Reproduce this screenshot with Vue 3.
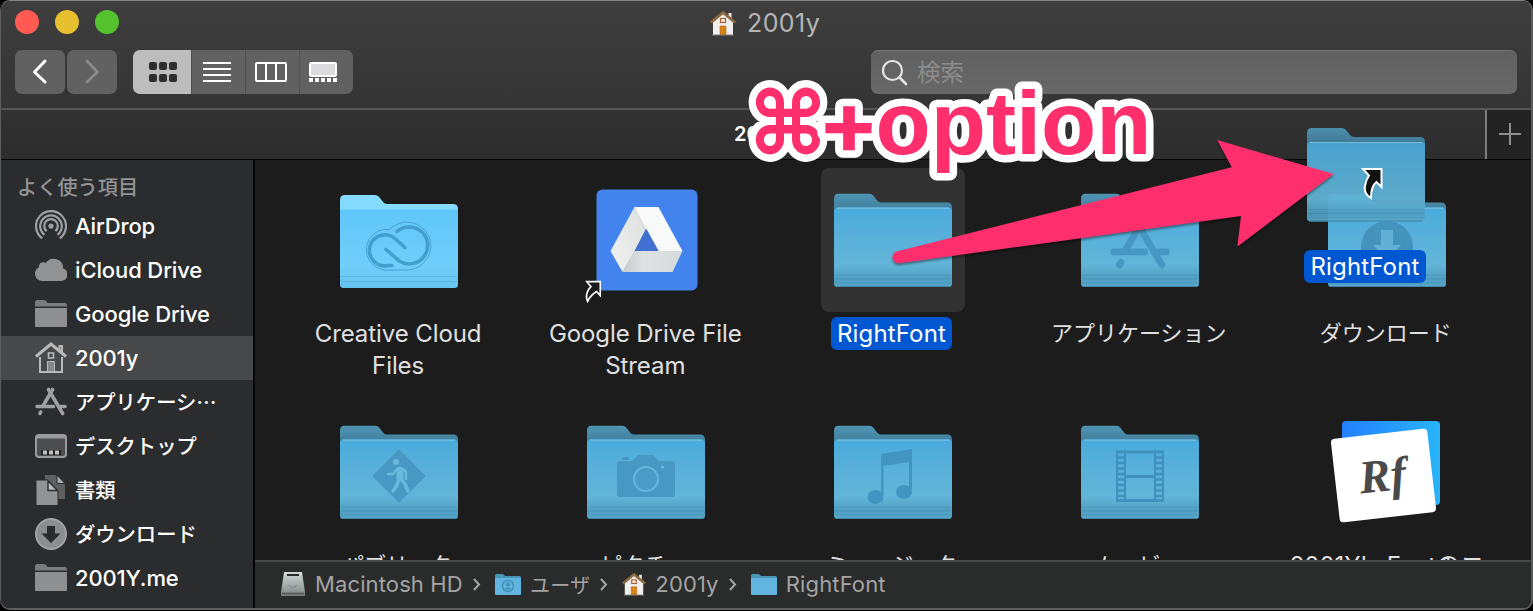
<script setup>
const sidebar = [
  { icon: 'airdrop', label: 'AirDrop' },
  { icon: 'cloud', label: 'iCloud Drive' },
  { icon: 'folder', label: 'Google Drive' },
  { icon: 'home', label: '2001y', active: true },
  { icon: 'apps', label: 'アプリケーシ…', ja: true },
  { icon: 'desktop', label: 'デスクトップ', ja: true },
  { icon: 'docs', label: '書類', ja: true },
  { icon: 'download', label: 'ダウンロード', ja: true },
  { icon: 'folder', label: '2001Y.me' },
]
const files = [
  { kind: 'light', glyph: 'cc', label: 'Creative Cloud Files' },
  { kind: 'gdrive', label: 'Google Drive File Stream' },
  { kind: 'folder', label: 'RightFont', selected: true },
  { kind: 'folder', glyph: 'apps', label: 'アプリケーション', ja: true },
  { kind: 'folder', glyph: 'download', label: 'ダウンロード', ja: true },
  { kind: 'folder', glyph: 'public', label: 'パブリック', ja: true },
  { kind: 'folder', glyph: 'camera', label: 'ピクチャ', ja: true },
  { kind: 'folder', glyph: 'music', label: 'ミュージック', ja: true },
  { kind: 'folder', glyph: 'movie', label: 'ムービー', ja: true },
  { kind: 'rightfont', label: '2001Y\'s Fontのコ' },
]
const path = [
  { icon: 'disk', label: 'Macintosh HD' },
  { icon: 'users', label: 'ユーザ', ja: true },
  { icon: 'house', label: '2001y' },
  { icon: 'folder', label: 'RightFont' },
]
const perforations = [0, 1, 2, 3, 4, 5, 6, 7]
</script>

<template>
  <div class="window">
    <svg class="defs" width="0" height="0">
      <defs>
        <linearGradient id="front" x1="0" y1="0" x2="0" y2="1">
          <stop offset="0" stop-color="#4aabdb" /><stop offset=".35" stop-color="#58b0da" />
          <stop offset=".72" stop-color="#62b5d8" /><stop offset=".9" stop-color="#519fc2" /><stop offset="1" stop-color="#57a8cb" />
        </linearGradient>
        <linearGradient id="back" x1="0" y1="0" x2="0" y2="1">
          <stop offset="0" stop-color="#4f95b4" /><stop offset=".6" stop-color="#4584a3" /><stop offset="1" stop-color="#3d7897" />
        </linearGradient>
        <linearGradient id="lightfront" x1="0" y1="0" x2="0" y2="1">
          <stop offset="0" stop-color="#5fc6f9" /><stop offset=".7" stop-color="#71cefb" /><stop offset="1" stop-color="#66c3ee" />
        </linearGradient>
        <linearGradient id="rfblue" x1="0" y1="0" x2="1" y2="0">
          <stop offset="0" stop-color="#2480ff" /><stop offset="1" stop-color="#28b4f8" />
        </linearGradient>
        <linearGradient id="gleft" x1="0" y1="1" x2="1" y2="0">
          <stop offset="0" stop-color="#f0f1f1" /><stop offset=".75" stop-color="#e2e4e4" /><stop offset="1" stop-color="#c4c8c9" />
        </linearGradient>
        <linearGradient id="gbottom" x1="0" y1="0" x2="1" y2="0">
          <stop offset="0" stop-color="#c5cacb" /><stop offset=".35" stop-color="#dfe2e3" /><stop offset="1" stop-color="#d5dadb" />
        </linearGradient>
        <linearGradient id="diskg" x1="0" y1="0" x2="0" y2="1">
          <stop offset="0" stop-color="#d4d9d8" /><stop offset=".8" stop-color="#8f9695" /><stop offset="1" stop-color="#777" />
        </linearGradient>
      </defs>
      <symbol id="s-folder" viewBox="0 0 118 94">
        <path d="M0 20V5Q0 0 5 0H35Q38 0 40 3L43 7Q44.500 9 47 9H113Q118 9 118 14V20Z" fill="url(#back)" />
        <rect y="14" width="118" height="79.500" rx="3.500" fill="url(#front)" />
        <path d="M3 14.600H115" stroke="#7cc8ea" />
        <path d="M1 81.500H117M1 85.500H117M1 89.500H117" stroke="#4691b4" stroke-width=".8" opacity=".7" />
        <path d="M2 93H116" stroke="#3f86a8" />
      </symbol>
      <symbol id="s-light" viewBox="0 0 118 94">
        <path d="M0 20V5Q0 0 5 0H35Q38 0 40 3L43 7Q44.500 9 47 9H113Q118 9 118 14V20Z" fill="#85dbfe" />
        <path d="M0 14.500H118V89.500Q118 93 114.500 93H3.500Q0 93 0 89.500Z" fill="url(#lightfront)" />
        <path d="M1 81.500H117M1 86.500H117" stroke="#55abd4" stroke-width=".8" opacity=".7" />
      </symbol>
      <symbol id="s-appstore" viewBox="0 0 32 30">
        <g fill="none" stroke="currentColor" stroke-width="3.600" stroke-linecap="round">
          <path d="M17.600 2.500L8 19" /><path d="M13.500 2.500L27.700 26.500" /><path d="M2 19.500H18.500M25.500 19.500H30M5.800 25L5 26.500" />
        </g>
      </symbol>
      <symbol id="s-house" viewBox="0 0 26 26">
        <path d="M18.500 3H21.500V9H18.500Z" fill="#e8e4e2" />
        <path d="M3 12L13 4L23 12V25H3Z" fill="#f1f0ef" />
        <path d="M1 12.500L13 2.500L25 12.500" fill="none" stroke="#8d6a3e" stroke-width="2.800" />
        <rect x="10.500" y="8.500" width="5" height="4" fill="#f6ede2" stroke="#a65c2c" stroke-width="1.200" />
        <path d="M10 16H16V25H10Z" fill="#d98411" stroke="#a8682a" stroke-width=".6" />
        <path d="M2 25H24" stroke="#817c77" />
      </symbol>
    </svg>

    <header class="toolbar">
      <div class="lights"><i class="red" /><i class="yellow" /><i class="green" /></div>
      <div class="title"><svg width="26" height="26"><use href="#s-house" /></svg><span>2001y</span></div>
      <div class="controls">
        <div class="nav">
          <button class="btn"><svg width="50" height="44"><path d="M30 11L19.500 22L30 32" fill="none" stroke="#fff" stroke-width="3" stroke-linecap="round" stroke-linejoin="round" /></svg></button>
          <button class="btn"><svg width="50" height="44"><path d="M20 11L30.500 22L20 32" fill="none" stroke="#8b8b8b" stroke-width="2.600" stroke-linecap="round" stroke-linejoin="round" /></svg></button>
        </div>
        <div class="views">
          <button class="on"><svg width="58" height="44" fill="#2e2e2e">
            <rect x="16" y="12" width="8" height="8" rx="2" /><rect x="26" y="12" width="8" height="8" rx="2" /><rect x="36" y="12" width="8" height="8" rx="2" />
            <rect x="16" y="24" width="8" height="8" rx="2" /><rect x="26" y="24" width="8" height="8" rx="2" /><rect x="36" y="24" width="8" height="8" rx="2" />
          </svg></button>
          <button><svg width="52" height="44"><path d="M11 13H39M11 19H39M11 25H39M11 31H39" stroke="#fff" stroke-width="2" /></svg></button>
          <button><svg width="52" height="44"><rect x="10" y="13" width="30" height="18" rx="1" fill="none" stroke="#fff" stroke-width="2" /><path d="M20 13V31M30 13V31" stroke="#fff" stroke-width="2" /></svg></button>
          <button><svg width="52" height="44"><rect x="10" y="13" width="26" height="13" rx="1" fill="#dcdcdf" stroke="#fff" stroke-width="2" /><path d="M9 30H37" stroke="#fff" stroke-width="4" stroke-dasharray="4 2" /></svg></button>
        </div>
        <div class="search">
          <svg width="30" height="30"><circle cx="12.500" cy="12.500" r="9.500" fill="none" stroke="#e4e4e4" stroke-width="2.200" /><path d="M19.500 19.500L26 26" stroke="#e4e4e4" stroke-width="2.600" stroke-linecap="round" /></svg>
          <span>検索</span>
        </div>
      </div>
    </header>

    <div class="tabs">
      <div class="tab">2001y</div>
      <div class="add"><svg width="24" height="24"><path d="M12 1V23M1 12H23" stroke="#8e8e8e" stroke-width="2" /></svg></div>
    </div>

    <div class="main">
      <aside class="side">
        <h2>よく使う項目</h2>
        <div v-for="item in sidebar" :key="item.label" class="row" :class="{ active: item.active, ja: item.ja }">
          <svg class="sicon" width="32" height="32" viewBox="0 0 32 32">
            <g v-if="item.icon === 'airdrop'" fill="none" stroke="#a0a1a2" stroke-width="2.200">
              <path d="M7.200 28.300A15 15 0 1 1 24.800 28.300" /><path d="M9.500 24.800A10.800 10.800 0 1 1 22.500 24.800" /><path d="M11.600 21.200A6.800 6.800 0 1 1 20.400 21.200" />
              <circle cx="16" cy="16" r="2.600" fill="#a0a1a2" stroke="none" />
            </g>
            <path v-else-if="item.icon === 'cloud'" d="M7.500 27A7.300 7.300 0 0 1 3.800 13.300Q4 8 8.500 8.200Q10 8.200 11 8.800A9.500 9.500 0 0 1 28.200 14.500A6.400 6.400 0 0 1 26 27Z" fill="#919293" />
            <g v-else-if="item.icon === 'folder'" fill="#8e8f90">
              <path d="M0 8.500V4.500Q0 2 2 2H9Q10.500 2 11.500 3.500L12.500 5H30Q32 5 32 7V8.500Z" opacity=".8" /><path d="M0 10H32V28Q32 29 31 29H1Q0 29 0 28Z" />
            </g>
            <g v-else-if="item.icon === 'home'" fill="none" stroke="#b9b9ba" stroke-width="2">
              <path d="M5 15V30H27V15M24.500 9V4H27V11" /><path d="M1 14.500L16 2L31 14.500" stroke-width="3" /><rect x="13.500" y="11" width="5" height="5" stroke-width="1.600" /><rect x="12.500" y="19.500" width="7" height="10" fill="#858687" stroke-width="1" />
            </g>
            <svg v-else-if="item.icon === 'apps'" y="1" width="32" height="30" class="gray"><use href="#s-appstore" /></svg>
            <g v-else-if="item.icon === 'desktop'">
              <rect x="1" y="5" width="30" height="22" rx="3" fill="#4d4e50" stroke="#9a9b9c" stroke-width="2" /><path d="M1 8V6H31V8Z" fill="#9a9b9c" stroke="#9a9b9c" />
              <path d="M6 20H26V25H6Z" fill="#222" /><path d="M8 22.500H24" stroke="#c0c0c0" stroke-width="4" stroke-dasharray="4 2" />
            </g>
            <g v-else-if="item.icon === 'docs'">
              <path d="M10 1H20L30 10V25H10Z" fill="#5f6061" /><path d="M22 1L30 9.500H22Z" fill="#a9aaab" stroke="#2a2c2d" />
              <path d="M1 6H12.500L23 17V31.500H1Z" fill="#929394" stroke="#2a2c2d" /><path d="M13 7L22.500 16.500H13Z" fill="#bbb" stroke="#2a2c2d" stroke-width="1.400" />
            </g>
            <g v-else>
              <circle cx="16" cy="16" r="15" fill="#8c8d8e" stroke="#a2a3a4" stroke-width="2" /><path d="M12 8H20V15.500H25.500L16 25L6.500 15.500H12Z" fill="#292b2c" />
            </g>
          </svg>
          <span>{{ item.label }}</span>
        </div>
      </aside>

      <section class="content">
        <div class="grid">
          <div v-for="f in files" :key="f.label" class="cell" :class="{ selected: f.selected, ja: f.ja }">
            <svg class="art" width="144" height="144" viewBox="0 0 144 144">
              <g v-if="f.kind === 'light'">
                <svg x="13" y="27" width="118" height="94"><use href="#s-light" /></svg>
                <g fill="none" stroke="#429fd0" stroke-linecap="round" transform="translate(1 .500)">
                  <path d="M56 101.500A19.500 19.500 0 1 1 61.500 61A24 24 0 1 1 81 101.500Z" stroke-width=".9" />
                  <path d="M64 97H60A15.500 15.500 0 1 1 67 70L77 79" stroke-width="3.600" />
                  <path d="M58 81L72 93A18.500 18.500 0 1 0 69 63" stroke-width="3.600" />
                </g>
              </g>
              <g v-else-if="f.kind === 'gdrive'" transform="translate(.500 0)">
                <rect x="22" y="21.500" width="101" height="101" rx="6" fill="#4383ee" />
                <path d="M60 39L74 60L48 104L36 83Z" fill="url(#gleft)" />
                <path d="M60 39H84L108 83H84Z" fill="#f8f9f9" />
                <path d="M60 83H108L98 104H48Z" fill="url(#gbottom)" />
                <path d="M71.500 60.500L84 83H60Z" fill="#4170d0" />
                <svg x="9" y="112" width="18" height="23" viewBox="0 0 22 28" class="alias"><path d="M4 2H20.500V19L16 14Q9 18 5 26Q1 17 9 8Z" /></svg>
              </g>
              <g v-else-if="f.kind === 'rightfont'">
                <rect x="27" y="21" width="98" height="84" rx="4" fill="url(#rfblue)" />
                <rect x="20" y="33.500" width="97" height="84" rx="4" transform="rotate(-6.500 68.500 75.500)" fill="#fff" />
                <text x="44" y="91" transform="rotate(-6 68 76)" class="rf">Rf</text>
              </g>
              <g v-else>
                <svg x="13" y="25.500" width="118" height="94"><use href="#s-folder" /></svg>
                <svg v-if="f.glyph === 'apps'" x="42" y="47" width="60" height="57" class="tint"><use href="#s-appstore" /></svg>
                <g v-else-if="f.glyph === 'download'"><circle cx="72" cy="79" r="26" fill="#4393bd" /><path d="M66 62H78V77H86L72 92L58 77H66Z" fill="#62b0d5" /></g>
                <g v-else-if="f.glyph === 'public'">
                  <rect x="53" y="57" width="38" height="38" rx="1.500" transform="rotate(45 72 76)" fill="#4898c3" />
                  <g fill="none" stroke="#69b9dc" stroke-linecap="round" stroke-linejoin="round">
                    <circle cx="69" cy="62" r="1.500" stroke-width="3" /><path d="M73 70L73 78" stroke-width="7" /><path d="M70 69L66 74H61M76 69L79 72V79" stroke-width="2.500" /><path d="M72 79L70 85L66 91M74 79L78 84L81 91" stroke-width="3.500" />
                  </g>
                </g>
                <g v-else-if="f.glyph === 'camera'">
                  <path d="M43 64Q43 61 46 61H58L63 56Q64 55 66 55H77Q79 55 80 56L85 61H98Q101 61 101 64V94Q101 97 98 97H46Q43 97 43 94Z" fill="#4798c3" /><rect x="48" y="57" width="7" height="3" rx="1.500" fill="#4798c3" />
                  <circle cx="72" cy="79" r="12" fill="#4b9cc6" stroke="#65b8dd" stroke-width="2" /><circle cx="88.500" cy="67" r="1.600" fill="#65b8dd" />
                </g>
                <g v-else-if="f.glyph === 'music'" fill="#4395c1">
                  <path d="M60 54L91 49V90H88V62L62.500 66V96H60Z" /><ellipse cx="54.500" cy="97" rx="8" ry="7" /><ellipse cx="83" cy="92" rx="8" ry="7" />
                </g>
                <g v-else-if="f.glyph === 'movie'" fill="none" stroke="#4091be">
                  <path d="M49 50V102M57 50V102M87 50V102M95 50V102" stroke-width="2" /><path d="M48 52H96M56 76.500H88M48 100.500H96" stroke-width="2.800" />
                  <path v-for="p in perforations" :key="p" :d="`M49 ${57.500 + p * 5.500}H57M87 ${57.500 + p * 5.500}H95`" stroke-width="2.500" />
                </g>
              </g>
            </svg>
            <div class="name"><span>{{ f.label }}</span></div>
          </div>
        </div>
        <footer class="pathbar">
          <template v-for="(p, i) in path" :key="p.label">
            <svg v-if="i" class="sep" width="10" height="16"><path d="M2 3L7 8.500L2 14" fill="none" stroke="#a5a5a5" stroke-width="2" /></svg>
            <div class="crumb" :class="{ ja: p.ja }">
              <svg v-if="p.icon === 'disk'" width="26" height="26" viewBox="0 0 26 26"><path d="M4 1H22L25 21V25H1V21Z" fill="url(#diskg)" /><path d="M7 4H19" stroke="#2a2a2a" stroke-width="2" /><path d="M9 14Q13 19 17 14" fill="none" stroke="#8a9190" stroke-width="1.500" /><path d="M2 22.500H24" stroke="#555" stroke-width="1.500" /></svg>
              <svg v-else-if="p.icon === 'house'" width="24" height="24"><use href="#s-house" /></svg>
              <svg v-else width="26" height="21" viewBox="0 0 26 21"><path d="M0 6V1.500Q0 0 1.500 0H8L10 2H24.500Q26 2 26 3.500V6Z" fill="#4795b9" /><rect y="4" width="26" height="17" rx="1" fill="#62b5df" /><g v-if="p.icon === 'users'" fill="#438fb6"><circle cx="13" cy="12" r="5.500" fill="none" stroke="#438fb6" stroke-width="1.500" /><circle cx="13" cy="10.500" r="2" /><path d="M9.500 15.500Q13 11 16.500 15.500Z" /></g></svg>
              <span>{{ p.label }}</span>
            </div>
          </template>
        </footer>
      </section>
    </div>

    <div class="drag">
      <svg class="ghost" width="118" height="94"><use href="#s-folder" /></svg>
      <svg class="cursor" width="22" height="34" viewBox="0 0 22 34"><path d="M2 2H20.500V20L15.500 15Q10 19 10 31Q2.500 27 4 19Q5 13 8 8.500Z" fill="#111" stroke="#fff" stroke-width="2" /></svg>
      <span class="pill">RightFont</span>
    </div>

    <svg class="annot" width="1533" height="611">
      <path class="arrow" d="M897.500 251.300L1231.700 167.300L1217.300 140L1333.700 174L1237.300 246.700L1241 216L899.500 263.200A6 6 0 0 1 897.500 251.300Z" />
      <g class="keys">
        <text x="747" y="152.500" textLength="82" lengthAdjust="spacingAndGlyphs">⌘</text>
        <text x="817" y="153.500" textLength="64" lengthAdjust="spacingAndGlyphs">+</text>
        <text x="875.500" y="153.500" textLength="276" lengthAdjust="spacingAndGlyphs" class="word">option</text>
      </g>
    </svg>
  </div>
</template>

<style>
body { background: #000; overflow: hidden; }
</style>
<style scoped>
.window { position: relative; box-sizing: border-box; width: 1533px; height: 610px; border: 1px solid #5d5d5d; border-top-color: #858585; border-right-width: 2px; border-bottom-width: 2px; border-radius: 10px; overflow: hidden; background: #1c1c1c; font-family: Inter, "Noto Sans CJK JP", sans-serif; display: flex; flex-direction: column; color: #fff; }
.defs { position: absolute; }
svg { display: block; flex: none; }
.toolbar { position: relative; box-sizing: border-box; height: 109px; background: linear-gradient(#3e3e3e, #343434); border-bottom: 2px solid #565656; flex: none; }
.lights { position: absolute; left: 14px; top: 9px; display: flex; gap: 16px; }
.lights i { width: 24px; height: 24px; border-radius: 50%; }
.red { background: #ff5b52; } .yellow { background: #e7c030; } .green { background: #53c22c; }
.title { height: 44px; margin-left: 709px; display: flex; align-items: center; gap: 11px; font-size: 25px; letter-spacing: .4px; color: #b5b5b5; }
.controls { display: flex; padding: 5px 14px 0; height: 44px; }
.nav { display: flex; gap: 2px; }
button { border: 0; padding: 0; margin: 0; background: none; }
.btn { width: 50px; background: #616161; border-radius: 7px; overflow: hidden; }
.views { display: flex; margin-left: 16px; width: 220px; background: #616161; border-radius: 7px; overflow: hidden; }
.views button { width: 54px; border-left: 1px solid #505050; box-sizing: border-box; }
.views .on { width: 58px; background: #bdbdbd; border: 0; }
.search { margin-left: auto; width: 646px; box-sizing: border-box; background: linear-gradient(#606060, #686868); border-top: 1px solid #777; border-radius: 7px; display: flex; align-items: center; padding-left: 9px; font-size: 23.500px; color: #8c8c8c; gap: 7px; }
.search span { margin-top: -4px; }
.tabs { height: 50px; flex: none; display: flex; background: linear-gradient(#323232, #2d2d2d); border-bottom: 1px solid #050505; box-sizing: border-box; }
.tab { width: 1484px; padding-left: 733px; box-sizing: border-box; line-height: 48px; font-size: 20px; font-weight: 600; }
.add { flex: 1; border-left: 2px solid #7d7d7d; background: #232323; display: flex; align-items: center; justify-content: center; padding-left: 2px; }
.add svg { margin-top: -2px; }
.main { flex: 1; min-height: 0; display: flex; }
.side { width: 252px; flex: none; background: #2a2c2d; border-right: 2px solid #050505; }
h2 { margin: 0; height: 43px; line-height: 53px; padding: 1px 0 0 16px; font-size: 20.200px; font-weight: 500; color: #939495; }
.row { height: 44px; display: flex; align-items: center; padding-left: 34px; gap: 8px; font-size: 22px; letter-spacing: -.12px; font-weight: 500; white-space: nowrap; }
.row.ja { font-size: 20.300px; letter-spacing: 0; font-family: "Noto Sans CJK JP", sans-serif; }
.row.ja span { margin-top: -2px; }
.active { background: #474849; }
.gray { color: #9fa0a1; }
.content { flex: 1; min-width: 0; display: flex; flex-direction: column; }
.grid { flex: 1; min-height: 0; overflow: hidden; display: grid; grid-template-columns: repeat(5, 247.2px); grid-auto-rows: 232px; padding: 8px 0 0 20px; box-sizing: border-box; }
.cell { display: flex; flex-direction: column; align-items: center; }
.art { border-radius: 8px; }
.selected .art { background: #323232; }
.name { width: 204px; margin: 6px 1px 0 0; text-align: center; font-size: 24px; letter-spacing: -.08px; line-height: 32px; color: #e0e0e0; white-space: pre-wrap; }
.cell.ja .name { font-size: 22px; letter-spacing: 0; margin: 5px 3px 0 0; }
.selected .name { margin: 5px 3px 0 0; letter-spacing: .15px; }
.selected .name span, .pill { display: inline-block; background: #0057d2; border-radius: 6px; padding: 0 6px; color: #fff; height: 33px; line-height: 34px; }
.tint { color: #4697c2; }
.alias path { fill: #1c1c1c; stroke: #fff; stroke-width: 2; }
.rf { font: italic bold 47px "Liberation Serif", serif; fill: #4a4a4a; }
.pathbar { height: 48px; box-sizing: border-box; flex: none; border-top: 2px solid #474747; background: #2a2b2b; display: flex; align-items: center; padding: 0 0 2px 25px; color: #a4a4a4; font-size: 22px; letter-spacing: .12px; }
.crumb { display: flex; align-items: center; gap: 9px; white-space: nowrap; }
.crumb.ja { font-size: 20px; }
.sep { margin: 0 13px 0 9.300px; }
.drag { position: absolute; left: 1303px; top: 127px; width: 122px; }
.ghost { margin-left: 3px; opacity: .93; }
.cursor { position: absolute; left: 57px; top: 39px; }
.pill { position: absolute; top: 122px; left: 0; width: 122px; box-sizing: border-box; text-align: center; font-size: 24px; letter-spacing: .15px; }
.annot { position: absolute; left: -1px; top: -1px; pointer-events: none; }
.arrow { fill: #ff2f6e; filter: drop-shadow(0 2px 1px rgba(0, 0, 0, .4)); }
.keys text { font: 700 88px Inter, "DejaVu Sans", sans-serif; fill: #ff2f6e; stroke: #fff; stroke-width: 15px; stroke-linejoin: round; paint-order: stroke; }
.keys .word { font: 700 89px "Liberation Sans", sans-serif; }
</style>
